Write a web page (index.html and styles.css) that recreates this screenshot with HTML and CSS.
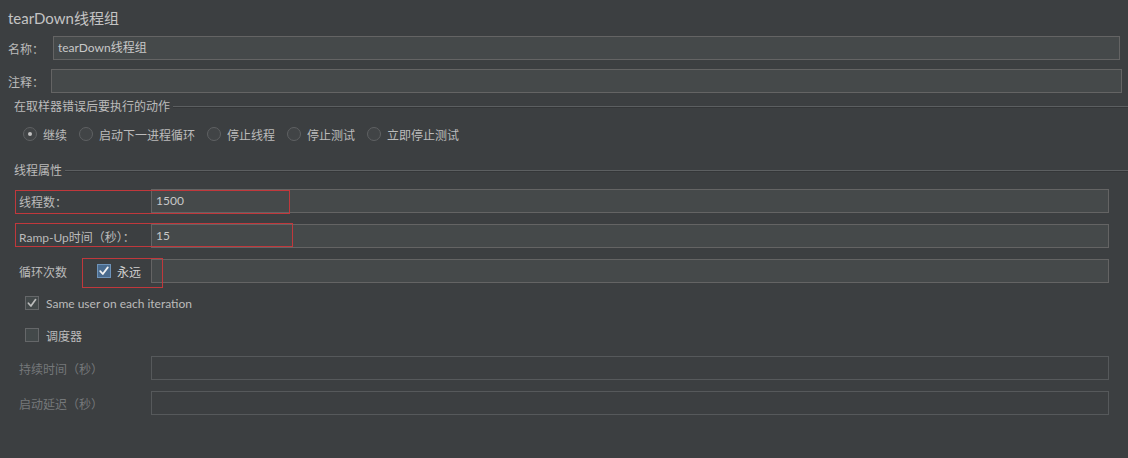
FILE: index.html
```html
<!DOCTYPE html>
<html lang="zh">
<head>
<meta charset="utf-8">
<title>tearDown线程组</title>
<link rel="stylesheet" href="styles.css">
</head>
<body>
<div class="panel">
  <div class="title">tearDown线程组</div>

  <div class="row row-name">
    <label class="lbl lbl-name">名称：</label>
    <div class="input">tearDown线程组</div>
  </div>

  <div class="row row-comment">
    <label class="lbl lbl-comment">注释：</label>
    <div class="input"></div>
  </div>

  <div class="legend legend-1"><span>在取样器错误后要执行的动作</span><i class="etch"></i></div>

  <div class="radios">
    <div class="radio-item"><span class="radio checked"></span><span>继续</span></div>
    <div class="radio-item"><span class="radio"></span><span>启动下一进程循环</span></div>
    <div class="radio-item"><span class="radio"></span><span>停止线程</span></div>
    <div class="radio-item"><span class="radio"></span><span>停止测试</span></div>
    <div class="radio-item"><span class="radio"></span><span>立即停止测试</span></div>
  </div>

  <div class="legend legend-2"><span>线程属性</span><i class="etch"></i></div>

  <div class="trow trow-first">
    <label class="tlbl">线程数：</label>
    <div class="input tinput">1500</div>
    <div class="mark mark-threads"></div>
  </div>

  <div class="trow">
    <label class="tlbl">Ramp-Up时间（秒）：</label>
    <div class="input tinput">15</div>
    <div class="mark mark-ramp"></div>
  </div>

  <div class="trow">
    <label class="tlbl">循环次数</label>
    <div class="input tinput"></div>
    <div class="forever">
      <span class="cb cb-blue">
        <svg viewBox="0 0 14 14" width="14" height="14"><path d="M3.2 7.2 L5.8 10 L10.8 3.4" fill="none" stroke="#f2f2f2" stroke-width="1.8" stroke-linecap="round" stroke-linejoin="round"/></svg>
      </span>
      <span class="forever-text">永远</span>
    </div>
    <div class="mark mark-loop"></div>
  </div>

  <div class="crow crow-first">
    <span class="cb">
      <svg viewBox="0 0 14 14" width="14" height="14"><path d="M3.4 7.2 L5.9 10 L10.6 3.6" fill="none" stroke="#bdbdbd" stroke-width="1.7" stroke-linecap="round" stroke-linejoin="round"/></svg>
    </span>
    <span class="ctext">Same user on each iteration</span>
  </div>

  <div class="crow">
    <span class="cb"></span>
    <span class="ctext">调度器</span>
  </div>

  <div class="trow trow-dis-first disabled">
    <label class="tlbl">持续时间（秒）</label>
    <div class="input tinput dis"></div>
  </div>

  <div class="trow disabled">
    <label class="tlbl">启动延迟（秒）</label>
    <div class="input tinput dis"></div>
  </div>
</div>
</body>
</html>
```

FILE: styles.css
```css
html, body {
  margin: 0;
  padding: 0;
  background: #3c3f41;
}
body {
  width: 1128px;
  height: 458px;
  overflow: hidden;
  color: #bbbbbb;
  font-family: Lato, "Noto Sans CJK SC", sans-serif;
  font-size: 12px;
}
.panel {
  display: flex;
  flex-direction: column;
}
.title {
  height: 36px;
  line-height: 36px;
  padding-left: 8px;
  font-size: 15px;
  color: #c4c4c4;
}
.row {
  display: flex;
  align-items: center;
  height: 24px;
}
.row-name {
  padding: 0 8px 0 8px;
}
.row-comment {
  margin-top: 9px;
  padding: 0 6px 0 8px;
}
.lbl-name { width: 45px; }
.lbl-comment { width: 43px; }
.lbl { flex: none; }
.input {
  flex: 1;
  box-sizing: border-box;
  height: 24px;
  line-height: 22px;
  padding-left: 4px;
  background: #45494a;
  border: 1px solid #646464;
  color: #c8c8c8;
  white-space: nowrap;
}
.legend {
  display: flex;
  align-items: center;
  height: 16px;
  line-height: 16px;
  padding-left: 14px;
}
.legend-1 { margin-top: 6px; }
.legend-2 { margin-top: 21px; }
.legend span { flex: none; padding-right: 3px; }
.etch {
  flex: 1;
  height: 0;
  border-top: 1px solid #5c5f61;
  border-bottom: 1px solid #343638;
  margin-top: -1px;
}
.radios {
  display: flex;
  align-items: center;
  height: 16px;
  margin-top: 11px;
  padding-left: 23px;
  gap: 12px;
}
.radio-item {
  display: flex;
  align-items: center;
  gap: 6px;
}
.radio {
  box-sizing: border-box;
  width: 14px;
  height: 14px;
  border-radius: 50%;
  border: 1px solid #5f6163;
  background: #414446;
  display: flex;
  align-items: center;
  justify-content: center;
}
.radio.checked::after {
  content: "";
  width: 4px;
  height: 4px;
  border-radius: 50%;
  background: #c2c2c2;
}
.trow {
  position: relative;
  display: flex;
  align-items: center;
  height: 24px;
  margin-top: 11px;
  padding: 0 19px 0 19px;
}
.trow-first { margin-top: 10px; }
.trow-dis-first { margin-top: 9px; }
.tlbl {
  flex: none;
  width: 132px;
  white-space: nowrap;
}
.tinput { padding-left: 4px; }
.disabled .tlbl { color: #75787a; }
.input.dis {
  background: #3c3f41;
  border-color: #56595b;
}
.mark {
  position: absolute;
  box-sizing: border-box;
  border: 1px solid #c0383c;
  pointer-events: none;
}
.mark-threads { left: 15px; top: 1px; width: 275px; height: 24px; }
.mark-ramp { left: 15px; top: -1px; width: 278px; height: 24px; }
.mark-loop { left: 82px; top: -1px; width: 81px; height: 30px; }
.forever {
  position: absolute;
  left: 97px;
  top: 4px;
  display: flex;
  align-items: center;
  gap: 6px;
  height: 16px;
}
.forever-text { color: #d0d0d0; }
.cb {
  box-sizing: border-box;
  width: 14px;
  height: 14px;
  border: 1px solid #656769;
  background: #43494a;
  display: inline-flex;
  align-items: center;
  justify-content: center;
  flex: none;
}
.cb svg { display: block; margin: -1px; }
.cb-blue {
  background: #4a6b8e;
  border-color: #6e93b9;
}
.crow {
  display: flex;
  align-items: center;
  height: 24px;
  margin-top: 8px;
  padding-left: 25px;
  gap: 7px;
}
.ctext { white-space: nowrap; }
```
